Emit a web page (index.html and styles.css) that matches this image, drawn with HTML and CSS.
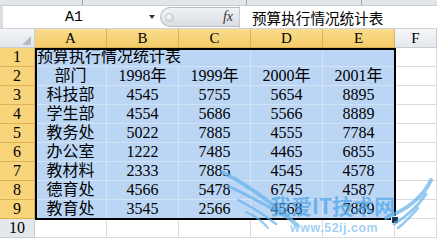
FILE: index.html
```html
<!DOCTYPE html>
<html lang="zh">
<head>
<meta charset="utf-8">
<title>预算执行情况统计表</title>
<link rel="stylesheet" href="styles.css">
</head>
<body>
<div class="app">
  <div class="topstrip">
    <div class="seg s1"></div>
    <div class="seg s2"></div>
    <div class="seg s3"></div>
    <div class="seg s4"></div>
  </div>
  <div class="fbar">
    <div class="namebox"><span class="nbtext">A1</span><span class="nbarrow"></span></div>
    <div class="pill"><span class="dot"></span><span class="fx">fx</span></div>
    <div class="finput">预算执行情况统计表</div>
  </div>
  <div class="sheet">
    <div class="cell corner"><span class="tri"></span></div>
    <div class="cell hd hl">A</div>
    <div class="cell hd hl">B</div>
    <div class="cell hd hl">C</div>
    <div class="cell hd hl">D</div>
    <div class="cell hd hl">E</div>
    <div class="cell hd">F</div>

    <div class="cell rh hl">1</div>
    <div class="cell sel title">预算执行情况统计表</div>
    <div class="cell sel"></div>
    <div class="cell sel"></div>
    <div class="cell"></div>

    <div class="cell rh hl">2</div>
    <div class="cell sel">部门</div>
    <div class="cell sel">1998年</div>
    <div class="cell sel">1999年</div>
    <div class="cell sel">2000年</div>
    <div class="cell sel">2001年</div>
    <div class="cell"></div>

    <div class="cell rh hl">3</div>
    <div class="cell sel">科技部</div>
    <div class="cell sel">4545</div>
    <div class="cell sel">5755</div>
    <div class="cell sel">5654</div>
    <div class="cell sel">8895</div>
    <div class="cell"></div>

    <div class="cell rh hl">4</div>
    <div class="cell sel">学生部</div>
    <div class="cell sel">4554</div>
    <div class="cell sel">5686</div>
    <div class="cell sel">5566</div>
    <div class="cell sel">8889</div>
    <div class="cell"></div>

    <div class="cell rh hl">5</div>
    <div class="cell sel">教务处</div>
    <div class="cell sel">5022</div>
    <div class="cell sel">7885</div>
    <div class="cell sel">4555</div>
    <div class="cell sel">7784</div>
    <div class="cell"></div>

    <div class="cell rh hl">6</div>
    <div class="cell sel">办公室</div>
    <div class="cell sel">1222</div>
    <div class="cell sel">7485</div>
    <div class="cell sel">4465</div>
    <div class="cell sel">6855</div>
    <div class="cell"></div>

    <div class="cell rh hl">7</div>
    <div class="cell sel">教材料</div>
    <div class="cell sel">2333</div>
    <div class="cell sel">7885</div>
    <div class="cell sel">4545</div>
    <div class="cell sel">4578</div>
    <div class="cell"></div>

    <div class="cell rh hl">8</div>
    <div class="cell sel">德育处</div>
    <div class="cell sel">4566</div>
    <div class="cell sel">5478</div>
    <div class="cell sel">6745</div>
    <div class="cell sel">4587</div>
    <div class="cell"></div>

    <div class="cell rh hl">9</div>
    <div class="cell sel">教育处</div>
    <div class="cell sel">3545</div>
    <div class="cell sel">2566</div>
    <div class="cell sel">4568</div>
    <div class="cell sel">7889</div>
    <div class="cell"></div>

    <div class="cell rh">10</div>
    <div class="cell"></div>
    <div class="cell"></div>
    <div class="cell"></div>
    <div class="cell"></div>
    <div class="cell"></div>
    <div class="cell"></div>

    <div class="selbox"></div>
    <div class="handle"></div>
  </div>
</div>
<svg class="watermark" width="437" height="240" viewBox="0 0 437 240" xmlns="http://www.w3.org/2000/svg">
  <g fill="none" stroke="#62b2ec" stroke-linecap="round">
    <path d="M222 172 Q258 190 298 226" stroke-width="4"/>
    <path d="M228 186 Q258 200 288 218" stroke-width="3"/>
    <path d="M238 200 Q258 210 276 224" stroke-width="2.5"/>
    <path d="M246 212 Q260 218 268 228" stroke-width="2"/>
    <path d="M431 180 Q420 204 386 218" stroke-width="4"/>
    <path d="M426 194 Q414 212 394 224" stroke-width="3"/>
    <path d="M418 208 Q408 220 398 228" stroke-width="2.5"/>
  </g>
  <text x="270" y="214" class="wm1">我爱IT技术网</text>
  <text x="290" y="232" class="wm2">www.52ij.com</text>
</svg>
</body>
</html>
```
FILE: styles.css
```css
* { box-sizing: border-box; margin: 0; padding: 0; }
html, body { width: 437px; height: 240px; overflow: hidden; }
body {
  background: #fff;
  font-family: "Liberation Serif", "Noto Sans CJK SC", serif;
  color: #000;
  position: relative;
}
.app { display: flex; flex-direction: column; }

.topstrip { height: 6px; display: flex; background: #e2e6eb; border-bottom: 1px solid #c7cdd4; }
.seg { border-right: 1px solid #9fa7b1; }
.s1 { width: 83px; }
.s2 { width: 164px; }
.s3 { width: 115px; }
.s4 { flex: 1; border-right: none; }

.fbar {
  height: 23px;
  display: flex;
  align-items: center;
  background: #fff;
  border-left: 3px solid #d9dee4;
  border-bottom: 1px solid #cdd3da;
}
.namebox { width: 157px; display: flex; align-items: center; height: 100%; }
.nbtext { width: 142px; text-align: center; font-size: 15px; font-family: "Liberation Mono", monospace; }
.nbarrow {
  width: 0; height: 0; margin-left: 4px;
  border-left: 3.5px solid transparent; border-right: 3.5px solid transparent;
  border-top: 4px solid #333;
}
.pill {
  width: 79px; height: 20px;
  border: 1px solid #b5bcc5; border-right: none;
  border-radius: 10px 0 0 10px;
  background: linear-gradient(#f0f2f5, #dadee3);
  display: flex; align-items: center; justify-content: space-between;
  padding: 0 6px 0 4px;
}
.dot { width: 9px; height: 9px; border-radius: 50%; background: radial-gradient(circle at 40% 35%, #fafbfc, #c9ced5); border: 1px solid #c2c8cf; }
.fx { font-style: italic; font-size: 14px; color: #333; font-family: "Liberation Serif", serif; }
.finput {
  flex: 1; height: 100%;
  border-left: 1px solid #c4cad1;
  padding-left: 12px;
  font-family: "Noto Sans CJK SC", sans-serif;
  font-size: 14.6px; line-height: 23px;
}

.sheet {
  display: grid;
  grid-template-columns: 35px repeat(5, 72px) 1fr;
  grid-auto-rows: 19px;
  position: relative;
}
.cell {
  border-right: 1px solid #d9dbde;
  border-bottom: 1px solid #d9dbde;
  font-size: 16px;
  line-height: 16px;
  white-space: nowrap;
  display: flex;
  align-items: flex-end;
  justify-content: center;
  padding-bottom: 1px;
}
.sel { background: #bbd6f5; border-color: #d3e3f6; }
.title { grid-column: span 3; justify-content: flex-start; padding-left: 2px; }

.hd {
  background: linear-gradient(#f6f7f9, #e4e8ed);
  border-color: #c5cbd2;
  font-size: 15px;
  align-items: center;
  padding-bottom: 0;
}
.rh {
  background: #e4e8ed;
  border-color: #c5cbd2;
  font-size: 16px;
}
.hd.hl { background: linear-gradient(#f9dc8e, #f4cc68); border-color: #dcb457; }
.rh.hl { background: #f8d57a; border-color: #dcb457; }
.corner { background: linear-gradient(#f3f5f7, #e2e6eb); border-color: #c5cbd2; position: relative; }
.tri {
  position: absolute; right: 3px; bottom: 2px;
  width: 9px; height: 9px;
  background: #b5bbc3;
  clip-path: polygon(100% 0, 100% 100%, 0 100%);
}

.selbox {
  position: absolute;
  left: 35px; top: 19px;
  width: 361px; height: 172px;
  border: 2px solid #000;
  pointer-events: none;
}
.handle {
  position: absolute;
  left: 392px; top: 188px;
  width: 6px; height: 6px;
  background: #1d3550;
  outline: 1px solid #fff;
}

.watermark { position: absolute; left: 0; top: 0; opacity: 0.7; pointer-events: none; }
.wm1 { font-family: "Noto Sans CJK SC", sans-serif; font-weight: 700; font-size: 21px; fill: #4aa4e8; }
.wm2 { font-family: "Liberation Sans", sans-serif; font-weight: 700; font-size: 12.5px; fill: #7dbdf0; letter-spacing: 0.5px; }
```
